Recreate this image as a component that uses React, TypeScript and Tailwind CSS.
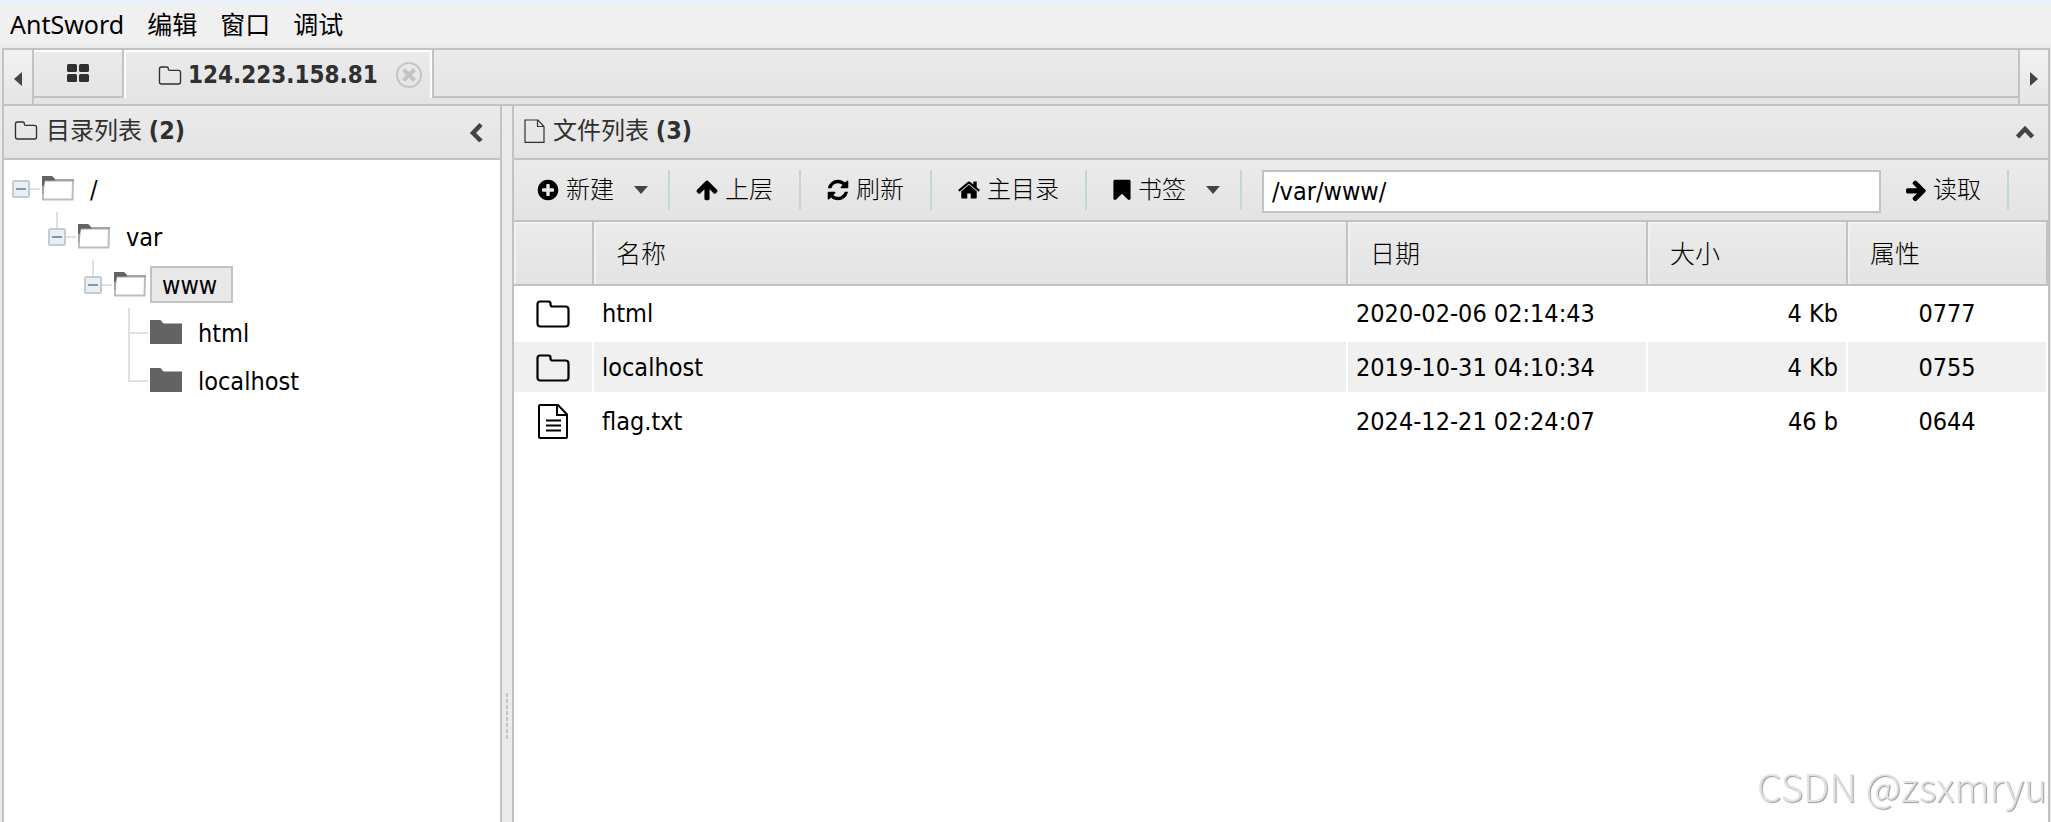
import type { ReactNode } from "react";

const FA = {
  plus: "M1344 960v-128q0-26-19-45t-45-19h-256v-256q0-26-19-45t-45-19h-128q-26 0-45 19t-19 45v256h-256q-26 0-45 19t-19 45v128q0 26 19 45t45 19h256v256q0 26 19 45t45 19h128q26 0 45-19t19-45v-256h256q26 0 45-19t19-45zm320-64q0 209-103 385.5t-279.5 279.5-385.5 103-385.5-103-279.5-279.5-103-385.5 103-385.5 279.5-279.5 385.5-103 385.5 103 279.5 279.5 103 385.5z",
  up: "M1675 971q0 51-37 90l-75 75q-38 38-91 38-54 0-90-38l-294-293v704q0 52-37.5 84.5t-90.5 32.5h-128q-53 0-90.5-32.5t-37.5-84.5v-704l-294 293q-36 38-90 38t-90-38l-75-75q-38-38-38-90 0-53 38-91l651-651q35-37 90-37 54 0 91 37l651 651q37 39 37 91z",
  refresh: "M1639 1056q0 5-1 7-64 268-268 434.5t-478 166.5q-146 0-282.5-55t-243.5-157l-129 129q-19 19-45 19t-45-19-19-45v-448q0-26 19-45t45-19h448q26 0 45 19t19 45-19 45l-137 137q71 66 161 102t187 36q134 0 250-65t186-179q11-17 53-117 8-23 30-23h192q13 0 22.5 9.5t9.5 22.5zm25-800v448q0 26-19 45t-45 19h-448q-26 0-45-19t-19-45 19-45l138-138q-148-137-349-137-134 0-250 65t-186 179q-11 17-53 117-8 23-30 23h-199q-13 0-22.5-9.5t-9.5-22.5v-7q65-268 270-434.5t480-166.5q146 0 284 55.5t245 156.5l130-129q19-19 45-19t45 19 19 45z",
  home: "M1472 992v480q0 26-19 45t-45 19h-384v-384h-256v384h-384q-26 0-45-19t-19-45v-480q0-1 .5-3t.5-3l575-474 575 474q1 2 1 6zm223-69l-62 74q-8 9-21 11h-3q-13 0-21-7l-692-577-692 577q-12 8-24 7-13-2-21-11l-62-74q-8-10-7-23.5t11-21.5l719-599q32-26 76-26t76 26l244 204v-195q0-14 9-23t23-9h192q14 0 23 9t9 23v408l219 182q10 8 11 21.5t-7 23.5z",
  bookmark: "M1420 128q23 0 44 9 33 13 52.5 41t19.5 62v1289q0 34-19.5 62t-52.5 41q-19 8-44 8-48 0-83-32l-441-424-441 424q-36 33-83 33-23 0-44-9-33-13-52.5-41t-19.5-62v-1289q0-34 19.5-62t52.5-41q21-9 44-9h1048z",
  right: "M1600 960q0 54-37 91l-651 651q-39 37-91 37-51 0-90-37l-75-75q-38-38-38-91t38-91l293-293h-704q-52 0-84.5-37.5t-32.5-90.5v-128q0-53 32.5-90.5t84.5-37.5h704l-293-294q-38-36-38-90t38-90l75-75q38-38 90-38 53 0 91 38l651 651q37 35 37 90z",
};

function FaIcon({ d }: { d: string }) {
  return (
    <svg className="h-6 w-6 shrink-0" viewBox="0 0 1792 1792" aria-hidden="true">
      <path d={d} />
    </svg>
  );
}

function ArrowRightIcon() {
  return (
    <svg className="h-6 w-6 shrink-0" viewBox="-100 0 1792 1792" aria-hidden="true">
      <path d={FA.right} />
    </svg>
  );
}

function BookmarkIcon() {
  return (
    <svg className="h-6 w-5 shrink-0" viewBox="150 0 1493 1792" aria-hidden="true">
      <path d={FA.bookmark} />
    </svg>
  );
}

function FolderOutline({ className, stroke }: { className: string; stroke: number }) {
  return (
    <svg className={className} viewBox="0 0 34 28" fill="none" stroke="currentColor" strokeWidth={stroke} aria-hidden="true">
      <path d="M4 1.5H12.5Q14.5 1.5 14.5 3.5V4.5Q14.5 6.5 16.5 6.5H29.5Q32.5 6.5 32.5 9.5V23.5Q32.5 26.5 29.5 26.5H4.5Q1.5 26.5 1.5 23.5V4.5Q1.5 1.5 4 1.5Z" />
    </svg>
  );
}

function PageOutline() {
  return (
    <svg className="h-6 w-[21px]" viewBox="0 0 21 24" fill="none" stroke="currentColor" strokeWidth="1.2" aria-hidden="true">
      <path d="M1 1H14L20 7.500V23.300H1ZM13.500 1V7.500H20" />
    </svg>
  );
}

function TextFile() {
  return (
    <svg className="h-9 w-8" viewBox="0 0 32 36" fill="none" stroke="currentColor" strokeWidth="2" aria-hidden="true">
      <path d="M3 1H21L30 10.500V33Q30 34 29 34H3Q2 34 2 33V2Q2 1 3 1ZM20 1V11H30" />
      <path d="M9 16.500H24M9 21.500H24M9 26.500H24" />
    </svg>
  );
}

function Caret() {
  return (
    <svg className="h-2 w-3.5" viewBox="0 0 14 8" fill="#444" aria-hidden="true">
      <path d="M0 0H14L7 8Z" />
    </svg>
  );
}

function TreeFolder({ open }: { open: boolean }) {
  return (
    <svg className="h-8 w-8 shrink-0" viewBox="0 0 32 32" aria-hidden="true">
      {open ? (
        <>
          <path d="M1 8V27.500H30.500L31 8.500" fill="#fff" stroke="#bdbdbd" strokeWidth="2" />
          <path d="M0 4H10L13 7H32V9.500H3L1.500 22H0Z" fill="#a3a3a3" />
          <path d="M0 4H10L13 7V8.500H3L1.500 14H0Z" fill="#636363" />
        </>
      ) : (
        <path d="M0 4H10.500L13.500 7.500H32V28H0Z" fill="#636363" />
      )}
    </svg>
  );
}

function Branch({ kind }: { kind: "root" | "open" | "mid" | "last" }) {
  const box = kind === "root" || kind === "open";
  return (
    <svg className="h-12 w-9 shrink-0" viewBox="0 0 36 48" fill="none" aria-hidden="true">
      {kind !== "root" && <path d={kind === "mid" ? "M15 0V48" : "M15 0V26"} stroke="#e0e0e0" strokeWidth="2" />}
      <path d="M15 25H34" stroke="#e0e0e0" strokeWidth="2" />
      {box && (
        <>
          <rect x="7" y="17" width="16" height="16" rx="1.500" fill="#e9eff2" stroke="#c3ccd2" strokeWidth="2" />
          <path d="M10 25H20" stroke="#8297a4" strokeWidth="2" />
        </>
      )}
    </svg>
  );
}

type Node = { name: string; selected?: boolean; children?: Node[] };

const tree: Node = {
  name: "/",
  children: [
    { name: "var", children: [{ name: "www", selected: true, children: [{ name: "html" }, { name: "localhost" }] }] },
  ],
};

function TreeItem({ node, root, last }: { node: Node; root?: boolean; last: boolean }) {
  const kind = root ? "root" : node.children ? "open" : last ? "last" : "mid";
  return (
    <li role="treeitem" aria-selected={!!node.selected} aria-expanded={node.children ? true : undefined}>
      <div className="flex h-12 items-center">
        <Branch kind={kind} />
        <TreeFolder open={!!node.children} />
        <button
          className={
            node.selected
              ? "ml-1 h-[37px] border-2 border-[#c2c2c2] bg-[#e8e8e8] pt-0.5 pr-3.5 pl-2.5 leading-8"
              : "ml-1 h-[37px] border-2 border-transparent pt-0.5 pr-3.5 pl-2.5 leading-8"
          }
        >
          {node.name}
        </button>
      </div>
      {node.children && (
        <ul role="group" className="pl-9">
          {node.children.map((c, i, all) => (
            <TreeItem key={c.name} node={c} last={i === all.length - 1} />
          ))}
        </ul>
      )}
    </li>
  );
}

function Separator() {
  return <span className="h-10 w-0.5 shrink-0 bg-[#c5d5dc]" />;
}

function ToolButton({ icon, label, menu, tight }: { icon: ReactNode; label: string; menu?: boolean; tight?: boolean }) {
  return (
    <button
      className={`flex h-10 shrink-0 items-center gap-1.5 text-2xl font-light ${tight ? "pl-[22px]" : "pl-[25px]"} ${
        menu ? "pr-5" : "pr-[26px]"
      }`}
    >
      {icon}
      <span>{label}</span>
      {menu && (
        <span className="ml-3.5">
          <Caret />
        </span>
      )}
    </button>
  );
}

const files = [
  { dir: true, name: "html", date: "2020-02-06 02:14:43", size: "4 Kb", attr: "0777" },
  { dir: true, name: "localhost", date: "2019-10-31 04:10:34", size: "4 Kb", attr: "0755" },
  { dir: false, name: "flag.txt", date: "2024-12-21 02:24:07", size: "46 b", attr: "0644" },
];

const headCell =
  "h-16 border-r-2 border-b-2 border-[#c2c2c2] pt-1 pl-[22px] text-left font-light shadow-[inset_2px_2px_0_#f1f1f1]";
const cell = "h-[54px] border-y-2 border-r-2 border-white px-2 pt-0.5";

export default function App() {
  return (
    <div className="flex min-h-screen flex-col bg-[#ebebeb] font-['DejaVu_Sans_Condensed','Noto_Sans_CJK_SC',sans-serif] text-[25px] text-black">
      <nav className="mb-1 flex h-11 items-center gap-[23px] border-t-4 border-[#eaf1fb] bg-[#f0f0f0] pt-0.5 pl-2.5 font-['Noto_Sans','Noto_Sans_CJK_SC',sans-serif]">
        <button>AntSword</button>
        <button>编辑</button>
        <button>窗口</button>
        <button>调试</button>
      </nav>

      <div className="mr-px ml-0.5 flex grow flex-col border-x-2 border-t-2 border-[#c2c2c2]">
        <div className="flex h-14 border-b-2 border-[#c2c2c2] bg-linear-to-b from-[#ebebeb] to-[#e3e3e3]">
          <button aria-label="Scroll tabs left" className="flex w-[30px] items-center justify-center border-r-2 border-[#c2c2c2] bg-linear-to-b from-[#f2f2f2] to-[#e5e5e5] pt-1">
            <svg className="h-3.5 w-2" viewBox="0 0 8 14" fill="#444" aria-hidden="true">
              <path d="M8 0V14L0 7Z" />
            </svg>
          </button>
          <div role="tablist" className="flex h-12 grow">
            <button role="tab" aria-label="Home" aria-selected="false" className="flex w-[90px] items-center justify-center border-r-2 border-b-2 border-[#c2c2c2] shadow-[inset_0_2px_0_#fff]">
              <svg className="h-5 w-6" viewBox="0 0 24 20" fill="#303030" aria-hidden="true">
                <rect x="1" y="1" width="10" height="8" rx="1.500" />
                <rect x="13" y="1" width="10" height="8" rx="1.500" />
                <rect x="1" y="11" width="10" height="8" rx="1.500" />
                <rect x="13" y="11" width="10" height="8" rx="1.500" />
              </svg>
            </button>
            <div className="flex items-center border-x-2 border-t-2 border-white pr-2 pl-8 text-[#303030]">
              <button role="tab" aria-selected="true" className="flex items-center gap-1.5 text-2xl font-bold">
                <FolderOutline className="h-[19px] w-6" stroke={2} />
                124.223.158.81
              </button>
              <button aria-label="Close tab" className="ml-[18px]">
                <svg className="h-[26px] w-[26px]" viewBox="0 0 26 26" fill="none" stroke="#c4c4c4" aria-hidden="true">
                  <circle cx="13" cy="13" r="12" strokeWidth="2" />
                  <path d="M7.500 7.500L18.500 18.500M18.500 7.500L7.500 18.500" strokeWidth="4" />
                </svg>
              </button>
            </div>
            <div className="grow border-b-2 border-l-2 border-[#c2c2c2]" />
          </div>
          <button aria-label="Scroll tabs right" className="flex w-[30px] items-center justify-center border-l-2 border-[#c2c2c2] bg-linear-to-b from-[#f2f2f2] to-[#e5e5e5] pt-1">
            <svg className="h-3.5 w-2" viewBox="0 0 8 14" fill="#444" aria-hidden="true">
              <path d="M0 0V14L8 7Z" />
            </svg>
          </button>
        </div>

        <div className="flex grow">
          <aside className="flex w-[498px] shrink-0 flex-col border-r-2 border-[#c2c2c2] bg-white">
            <header className="flex h-[54px] items-center justify-between border-b-2 border-[#c2c2c2] bg-linear-to-b from-[#ebebeb] to-[#e3e3e3] pr-[17px] pl-2.5 text-[#303030]">
              <h2 className="flex items-center gap-2 pb-0.5 text-2xl">
                <FolderOutline className="h-[19px] w-6" stroke={2} />
                <span>
                  目录列表 <b className="text-[25px]">(2)</b>
                </span>
              </h2>
              <button aria-label="Collapse folder panel">
                <svg className="h-5 w-3.5" viewBox="0 0 14 20" fill="none" stroke="#444" strokeWidth="4.500" aria-hidden="true">
                  <path d="M12 2.500L4 11L12 19" />
                </svg>
              </button>
            </header>
            <ul role="tree" className="pt-1 pl-0.5">
              <TreeItem node={tree} root last />
            </ul>
          </aside>

          <div className="flex w-2.5 shrink-0 justify-center pt-[587px]">
            <span className="h-[46px] w-0.5 bg-[repeating-linear-gradient(to_bottom,#c2c2c2_0px,#c2c2c2_4px,#ebebeb_4px,#ebebeb_6px)]" />
          </div>

          <main className="flex min-w-0 grow flex-col border-l-2 border-[#c2c2c2] bg-white">
            <header className="flex h-[54px] items-center justify-between border-b-2 border-[#c2c2c2] bg-linear-to-b from-[#ebebeb] to-[#e3e3e3] pr-3.5 pl-2.5 text-[#303030]">
              <h2 className="flex items-center gap-2 pb-0.5 text-2xl">
                <PageOutline />
                <span>
                  文件列表 <b className="text-[25px]">(3)</b>
                </span>
              </h2>
              <button aria-label="Collapse file panel">
                <svg className="h-3.5 w-[18px]" viewBox="0 0 18 14" fill="none" stroke="#444" strokeWidth="4.500" aria-hidden="true">
                  <path d="M1.500 12L9 4L16.500 12" />
                </svg>
              </button>
            </header>

            <div className="flex h-[62px] items-center border-b-2 border-[#c2c2c2] bg-linear-to-b from-[#ebebeb] to-[#e3e3e3] pr-[39px]">
              <ToolButton icon={<FaIcon d={FA.plus} />} label="新建" menu tight />
              <Separator />
              <ToolButton icon={<FaIcon d={FA.up} />} label="上层" />
              <Separator />
              <ToolButton icon={<FaIcon d={FA.refresh} />} label="刷新" />
              <Separator />
              <ToolButton icon={<FaIcon d={FA.home} />} label="主目录" />
              <Separator />
              <ToolButton icon={<BookmarkIcon />} label="书签" menu />
              <Separator />
              <input
                aria-label="Path"
                defaultValue="/var/www/"
                className="mt-[3px] ml-5 h-[43px] min-w-0 grow border-2 border-[#c2c2c2] bg-white px-2 outline-none"
              />
              <ToolButton icon={<ArrowRightIcon />} label="读取" tight />
              <Separator />
            </div>

            <table className="w-full table-fixed border-separate border-spacing-0">
              <colgroup>
                <col className="w-20" />
                <col />
                <col className="w-[300px]" />
                <col className="w-[200px]" />
                <col className="w-[200px]" />
              </colgroup>
              <thead className="bg-linear-to-b from-[#ebebeb] to-[#e3e3e3]">
                <tr>
                  <th aria-label="Type" className={headCell} />
                  <th className={headCell}>名称</th>
                  <th className={headCell}>日期</th>
                  <th className={headCell}>大小</th>
                  <th className={headCell}>属性</th>
                </tr>
              </thead>
              <tbody>
                {files.map((f) => (
                  <tr key={f.name} className="even:bg-[#f0f0f0]">
                    <td className={cell}>
                      <span className="flex justify-center">
                        {f.dir ? <FolderOutline className="h-7 w-[34px]" stroke={2.2} /> : <TextFile />}
                      </span>
                    </td>
                    <td className={cell}>{f.name}</td>
                    <td className={cell}>{f.date}</td>
                    <td className={`${cell} text-right`}>{f.size}</td>
                    <td className={`${cell} text-center`}>{f.attr}</td>
                  </tr>
                ))}
              </tbody>
            </table>
          </main>
        </div>
      </div>

      <p className="pointer-events-none fixed right-1 bottom-3 font-['Noto_Sans_CJK_SC',sans-serif] text-[39px] leading-[50px] font-light text-[#e2e2e2] [text-shadow:1px_1px_1px_#999]">
        CSDN @zsxmryu
      </p>
    </div>
  );
}
